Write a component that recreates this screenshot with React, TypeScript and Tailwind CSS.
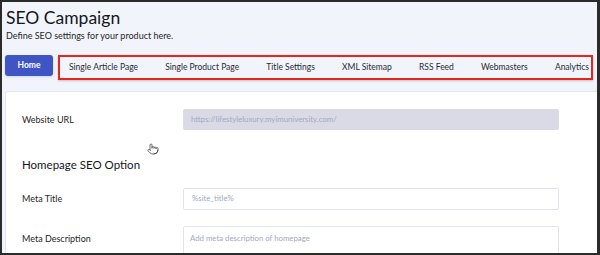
import { Pointer } from 'lucide-react'

const tabs = ['Single Article Page', 'Single Product Page', 'Title Settings', 'XML Sitemap', 'RSS Feed', 'Webmasters', 'Analytics']

export default function App() {
  return (
    <div className="relative w-[600px] h-[255px] overflow-hidden bg-[#2b2b2b] pt-[2px] pl-[2px] pr-[3px] pb-[2px]" style={{ fontFamily: 'Lato, "Noto Sans", sans-serif' }}>
      <div className="h-full bg-[#f1f4fb] overflow-hidden">
        <div className="pl-[4px] pt-[5px]">
          <h1 className="text-[17.5px] leading-[22px] text-[#16161c]">SEO Campaign</h1>
          <p className="text-[9px] leading-[12px] mt-[1px] text-[#1f1f26]">Define SEO settings for your product here.</p>
        </div>

        <div className="flex items-start mt-[13px] pl-[3px] pr-[4px] gap-[5px]">
          <button className="w-[48px] h-[21px] rounded-[3px] bg-[#3f55c6] text-white text-[8.5px] font-bold shadow-sm">Home</button>
          <div className="flex-1 h-[25px] border-2 border-[#e5261c] flex items-center justify-between pl-[9px] pr-[2px] shadow-[0_1px_2px_rgba(0,0,0,0.2)]">
            {tabs.map((t) => (
              <span key={t} className="text-[8.5px] text-[#2a2a33] whitespace-nowrap">{t}</span>
            ))}
          </div>
        </div>

        <div className="mt-[11px] ml-[3px] bg-white border-t border-l border-[#e3e6f0] rounded-tl-[3px] h-[200px] pl-[16px] pt-[17px]">
          <div className="flex items-center">
            <span className="w-[161px] text-[9px] text-[#1f1f26]">Website URL</span>
            <div className="w-[376px] h-[21px] rounded-[2px] bg-[#d9dae6] flex items-center px-[8px] text-[7.8px] text-[#a3a7c4]">https://lifestyleluxury.myimuniversity.com/</div>
          </div>

          <h2 className="mt-[26px] text-[11.5px] leading-[18px] text-[#16161c]">Homepage SEO Option</h2>

          <div className="flex items-center mt-[14px]">
            <span className="w-[161px] text-[9px] text-[#1f1f26]">Meta Title</span>
            <div className="w-[376px] h-[22px] rounded-[2px] border border-[#e2e4ec] flex items-center px-[8px] text-[7.8px] text-[#a3a7c4]">%site_title%</div>
          </div>

          <div className="flex items-start mt-[16px]">
            <span className="w-[161px] text-[9px] text-[#1f1f26] pt-[6px]">Meta Description</span>
            <div className="w-[376px] h-[40px] rounded-[2px] border border-[#e2e4ec] px-[6px] pt-[6px] text-[7.8px] text-[#a3a7c4]">Add meta description of homepage</div>
          </div>
        </div>
      </div>
      <Pointer className="absolute left-[147px] top-[143px] w-[12px] h-[12px] text-[#444]" strokeWidth={1.5} />
    </div>
  )
}
